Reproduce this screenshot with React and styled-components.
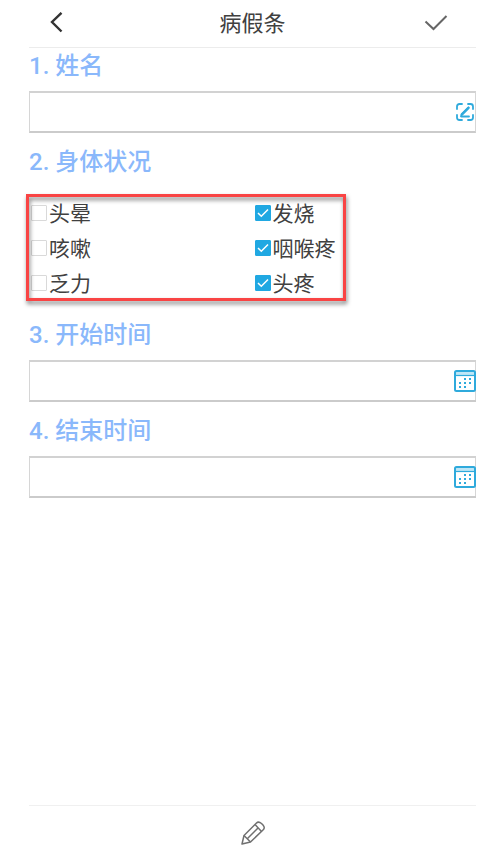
import React, { useState } from 'react';
import styled, { createGlobalStyle } from 'styled-components';

const GlobalStyle = createGlobalStyle`
  * {
    box-sizing: border-box;
  }

  body {
    margin: 0;
    background: #ffffff;
    color: #404040;
    font-family: Roboto, 'Noto Sans CJK SC', sans-serif;
  }
`;

const Page = styled.div`
  display: flex;
  flex-direction: column;
  min-height: 100vh;
  padding: 0 23px 0 29px;
`;

const Header = styled.header`
  display: grid;
  grid-template-columns: 1fr auto 1fr;
  align-items: center;
  height: 48px;
  border-bottom: 1px solid #ececec;
`;

const HeaderSide = styled.div`
  display: flex;
  justify-content: ${(props) => (props.$end ? 'flex-end' : 'flex-start')};
  padding: ${(props) => (props.$end ? '0 28px 0 0' : '0 0 0 16px')};
`;

const PageTitle = styled.h1`
  margin: 0;
  font-size: 22px;
  font-weight: 400;
  line-height: 32px;
`;

const IconButton = styled.button`
  display: flex;
  align-items: center;
  justify-content: center;
  padding: 0;
  border: none;
  background: none;
  color: ${(props) => props.$color || '#333333'};
  cursor: pointer;

  svg {
    display: block;
  }
`;

const Form = styled.form`
  display: flex;
  flex: 1;
  flex-direction: column;
  gap: 11px;
`;

const Field = styled.div`
  display: flex;
  flex-direction: column;
  gap: 6px;
`;

const Group = styled.fieldset`
  min-width: 0;
  margin: 0 0 5px;
  padding: 0;
  border: none;
`;

const Label = styled.label`
  display: block;
  padding: 0;
  color: #8ab8fb;
  font-size: 24px;
  font-weight: 500;
  line-height: 37px;
`;

const InputBox = styled.div`
  display: flex;
  align-items: center;
  height: 42px;
  padding-right: ${(props) => (props.$flush ? '0' : '1px')};
  border: 1px solid #d6d6d6;
  border-width: ${(props) => (props.$flush ? '2px 0 2px 1px' : '2px 1px')};
  border-top-color: #d2d2d2;
  border-bottom-color: #cbcbcb;
  box-shadow: ${(props) => (props.$flush ? 'inset -1px 0 #d6d6d6' : 'none')};
`;

const TextInput = styled.input`
  flex: 1;
  min-width: 0;
  height: 100%;
  padding: 0 8px;
  border: none;
  outline: none;
  background: none;
  font: inherit;
  font-size: 20px;
`;

const Options = styled.div`
  position: relative;
  display: grid;
  grid-template-columns: 1fr 1fr;
  margin-top: 13px;
  padding: 1px 0;
`;

const Highlight = styled.div`
  position: absolute;
  top: 0;
  bottom: 0;
  left: -3px;
  width: 320px;
  border: 3px solid #f94444;
  filter: drop-shadow(1px 3px 2px rgba(0, 0, 0, 0.5));
  pointer-events: none;
`;

const Option = styled.label`
  display: flex;
  align-items: center;
  gap: 2px;
  height: 35px;
  padding-left: 2px;
  font-size: 21px;
  line-height: 32px;
  cursor: pointer;
`;

const OptionText = styled.span`
  padding-top: 3px;
`;

const Checkbox = styled.input`
  appearance: none;
  width: 16px;
  height: 16px;
  margin: 0;
  border: 1px solid #d9d9d9;
  border-radius: 1px;
  background: #ffffff;
  cursor: pointer;

  &:checked {
    border-color: #20a8e2;
    background: #20a8e2
      url("data:image/svg+xml,%3Csvg xmlns='http://www.w3.org/2000/svg' viewBox='0 0 14 14' fill='none' stroke='white' stroke-width='1.5'%3E%3Cpath d='M2 7l3.300 3.300L12 3.500'/%3E%3C/svg%3E")
      center / 14px 14px no-repeat;
  }
`;

const Footer = styled.footer`
  display: flex;
  align-items: center;
  justify-content: center;
  height: 54px;
  border-top: 1px solid #f0f0f0;
`;

const BackIcon = () => (
  <svg width="24" height="24" viewBox="0 0 24 24" fill="none" stroke="currentColor" strokeWidth="2.4">
    <path d="M16.500 0.800L7 10L16.500 19.500" />
  </svg>
);

const CheckIcon = () => (
  <svg width="24" height="24" viewBox="0 0 24 24" fill="none" stroke="currentColor" strokeWidth="2">
    <path d="M1.500 9.500L9.500 17L22.500 4" />
  </svg>
);

const SignIcon = () => (
  <svg
    width="18"
    height="18"
    viewBox="0 0 18 18"
    fill="none"
    stroke="currentColor"
    strokeWidth="1.8"
    strokeLinecap="round"
    strokeLinejoin="round"
  >
    <path d="M1 6V3.500Q1 1 3.500 1H6M12 1h2.500Q17 1 17 3.500V6M17 12v2.500Q17 17 14.500 17H12M6 17H3.500Q1 17 1 14.500V12" />
    <path d="M12.500 4.500L5.500 11.500L5 13.500H13" />
    <path d="M12.500 4.800L6 11.300" strokeWidth="2.4" />
  </svg>
);

const CalendarIcon = () => (
  <svg width="22" height="22" viewBox="0 0 22 22" fill="none" stroke="currentColor">
    <path d="M2 2h18v3H2z" fill="#bfe6f6" stroke="none" />
    <rect x="1" y="1" width="20" height="20" rx="1.5" strokeWidth="2" />
    <path d="M1 5.500h20" strokeWidth="1.2" />
    <g fill="currentColor" stroke="none">
      <rect x="10" y="8" width="2" height="2" />
      <rect x="15" y="8" width="2" height="2" />
      <rect x="5" y="12" width="2" height="2" />
      <rect x="10" y="12" width="2" height="2" />
      <rect x="15" y="12" width="2" height="2" />
      <rect x="5" y="16" width="2" height="2" />
      <rect x="10" y="16" width="2" height="2" />
    </g>
  </svg>
);

const PencilIcon = () => (
  <svg
    width="26"
    height="26"
    viewBox="0 0 26 26"
    fill="none"
    stroke="currentColor"
    strokeWidth="1.5"
    strokeLinejoin="round"
  >
    <path d="M2 24L4 15.500L16.500 3Q18.500 1 21.500 3.500L23 5Q25.500 8 23 10L10.500 22Z" />
    <path d="M4 15.500L10.500 22M15 4.500L21.500 11.500M7.500 18.500L18 8" />
  </svg>
);

const symptoms = [
  { id: 1, text: '头晕', checked: false },
  { id: 2, text: '发烧', checked: true },
  { id: 3, text: '咳嗽', checked: false },
  { id: 4, text: '咽喉疼', checked: true },
  { id: 5, text: '乏力', checked: false },
  { id: 6, text: '头疼', checked: true },
];

const InputField = ({ id, label, action, icon, flush }) => (
  <Field>
    <Label htmlFor={id}>{label}</Label>
    <InputBox $flush={flush}>
      <TextInput id={id} type="text" />
      <IconButton type="button" $color="#2faadc" aria-label={action}>
        {icon}
      </IconButton>
    </InputBox>
  </Field>
);

const App = () => {
  const [items, setItems] = useState(symptoms);

  const onToggle = (id) =>
    setItems(
      items.map((item) =>
        item.id === id ? { ...item, checked: !item.checked } : item,
      ),
    );

  return (
    <>
      <GlobalStyle />
      <Page>
        <Header>
          <HeaderSide>
            <IconButton type="button" aria-label="返回">
              <BackIcon />
            </IconButton>
          </HeaderSide>
          <PageTitle>病假条</PageTitle>
          <HeaderSide $end>
            <IconButton type="submit" form="leave" $color="#666666" aria-label="提交">
              <CheckIcon />
            </IconButton>
          </HeaderSide>
        </Header>
        <Form id="leave" onSubmit={(e) => e.preventDefault()}>
          <InputField id="name" label="1. 姓名" action="签名" icon={<SignIcon />} />
          <Group>
            <Label as="legend">2. 身体状况</Label>
            <Options>
              {items.map((item) => (
                <Option key={item.id}>
                  <Checkbox
                    type="checkbox"
                    checked={item.checked}
                    onChange={() => onToggle(item.id)}
                  />
                  <OptionText>{item.text}</OptionText>
                </Option>
              ))}
              <Highlight />
            </Options>
          </Group>
          <InputField id="start" label="3. 开始时间" action="选择日期" icon={<CalendarIcon />} flush />
          <InputField id="end" label="4. 结束时间" action="选择日期" icon={<CalendarIcon />} flush />
        </Form>
        <Footer>
          <IconButton type="button" $color="#707070" aria-label="编辑">
            <PencilIcon />
          </IconButton>
        </Footer>
      </Page>
    </>
  );
};

export default App;
